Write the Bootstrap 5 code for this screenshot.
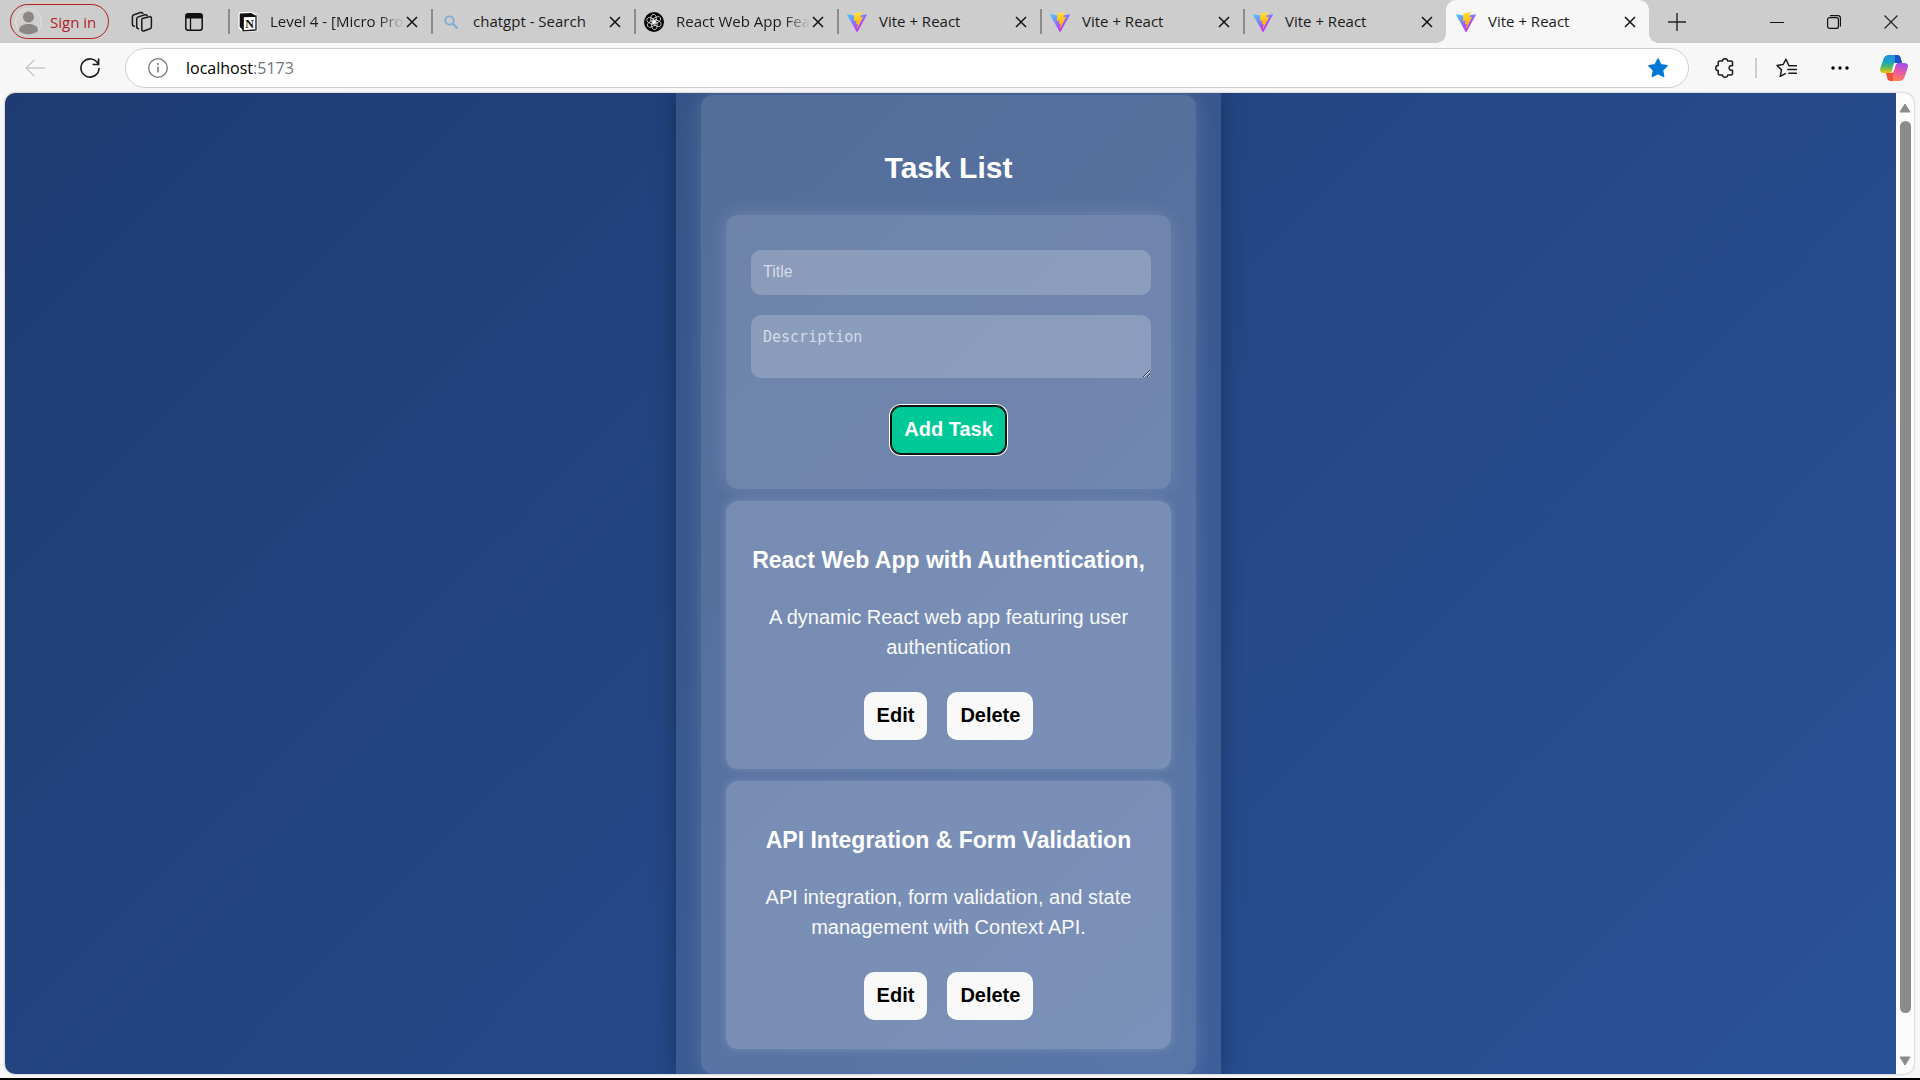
<!DOCTYPE html>
<html lang="en">
<head>
<meta charset="utf-8">
<meta name="viewport" content="width=device-width, initial-scale=1">
<title>Vite + React</title>
<link href="https://cdn.jsdelivr.net/npm/bootstrap@5.3.0/dist/css/bootstrap.min.css" rel="stylesheet">
<style>
  body { font-family: "Open Sans", "Noto Sans", sans-serif; background: #f7f7f7; color: #1b1b1b; }
  button { color: inherit; }
  svg { display: block; flex: none; }
  .ic { fill: none; stroke: #1b1b1b; stroke-width: 1.5; stroke-linecap: round; stroke-linejoin: round; }

  /* Tab strip */
  .tabstrip { height: 43px; background: #cdcdcd; font-size: 15px; line-height: 20px; }
  .signin { height: 35px; width: 99px; margin-left: 10px; padding: 0 4px; gap: 8px; border: 1px solid #b01e1e; color: #b01e1e; background: none; }
  .tool-first { margin-left: 22px; }
  .tool-second { margin-left: 32px; margin-right: 25px; }
  .plain { border: 0; background: none; padding: 0; display: flex; align-items: center; justify-content: center; }
  .browser-tab { width: 203px; height: 43px; padding-left: 7px; }
  .browser-tab::before { content: ""; width: 2px; height: 25px; background: #8b8b8b; flex: none; margin-left: -7px; margin-right: 8px; }
  .browser-tab a { gap: 12px; color: #1b1b1b; width: 164px; white-space: nowrap; }
  .browser-tab a span { padding-bottom: 2px; }
  .fading span { -webkit-mask-image: linear-gradient(90deg, #000 108px, transparent 134px); mask-image: linear-gradient(90deg, #000 108px, transparent 134px); }
  .browser-tab .plain { width: 20px; }
  .active-tab { background: #f7f7f7; border-radius: 10px 10px 0 0; position: relative; }
  .active-tab::before { background: none; }
  .active-tab::after { content: ""; position: absolute; bottom: 0; left: -10px; right: -10px; height: 10px; z-index: 0;
    background: radial-gradient(circle at 0 0, transparent 10px, #f7f7f7 10px) left / 10px 10px no-repeat,
                radial-gradient(circle at 100% 0, transparent 10px, #f7f7f7 10px) right / 10px 10px no-repeat; }
  .new-tab { width: 20px; margin-left: 18px; }
  .window-keys { gap: 37px; padding-right: 19px; }
  .window-keys .plain { width: 20px; height: 43px; }

  /* Address bar */
  .toolbar { height: 50px; padding: 0 8px 0 17px; }
  .slot { width: 36px; height: 36px; }
  .reload { margin-left: 19px; }
  .address { height: 40px; margin-left: 17px; padding: 0 20px 0 22px; border: 1px solid #cfcfcf; background: #fff; gap: 18px; font-size: 16px; }
  .address .host { color: #000; }
  .gap-before { margin-left: 18px; }
  .divider { width: 2px; height: 20px; background: #cfcfcf; margin: 0 11px 0 12px; }

  /* Page frame */
  .frame { margin: 0 6px 4px 5px; border-radius: 10px; box-shadow: 0 0 2px #9a9a9a; background: #fcfcfc; min-height: 0; }
  .stage { background: linear-gradient(135deg, #1e3c72, #2a5298); padding-right: 4px; font-family: "Liberation Sans", Arial, sans-serif; font-size: 20px; line-height: 30px; color: #fff; }
  .scroller { width: 18px; padding: 10px 0 8px; gap: 8px; }
  .thumb { width: 11px; margin-bottom: 35px; border-radius: 6px; background: #8b8b8b; }
  .taskbar-edge { height: 2px; background: #000; }

  /* Task app */
  .shell { width: 545px; padding: 2px 25px; background: rgba(255,255,255,.1); box-shadow: 0 0 20px rgba(0,0,0,.3); }
  .board { padding: 50px 25px 25px; border-radius: 12px; background: rgba(255,255,255,.15); box-shadow: 0 0 20px rgba(255,255,255,.15); }
  .board h1 { font-size: 30px; line-height: 45px; font-weight: 700; margin: 0 0 25px; }
  .tile { border-radius: 12px; margin-bottom: 12px; background: rgba(255,255,255,.2); box-shadow: 0 0 10px rgba(255,255,255,.2); padding: 42px 20px 29px; }
  .tile:last-child { margin-bottom: 0; }
  .tile h2 { font-size: 23px; line-height: 35px; font-weight: 700; margin: 0 0 24px; }
  .tile p { margin: 0 0 30px; color: #f9f9f9; }
  .tile-form { background: rgba(255,255,255,.15); box-shadow: 0 0 20px rgba(255,255,255,.15); padding: 35px 20px; }
  .fields { padding-left: 5px; }
  .field, .field:focus { border: 0; border-radius: 10px; background: rgba(255,255,255,.2); color: #fff; padding: 12px; font-size: 16px; line-height: 20px; box-shadow: none; }
  .field::placeholder { color: #d5dbe8; opacity: 1; }
  input.field { height: 45px; padding-bottom: 14px; margin-bottom: 20px; }
  textarea.field { height: 63px; min-height: 0; margin-bottom: 28px; font-family: "DejaVu Sans Mono", monospace; font-size: 15px; }
  .key, .key:hover { height: 48px; padding: 0 13px 2px; border: 0; border-radius: 10px; background: #f9f9f9; color: #000; font-size: 20px; line-height: 24px; font-weight: 700; }
  .key-add, .key-add:hover { background: #00c998; color: #fff; box-shadow: inset 0 0 0 1px #101010, 0 0 0 1px #101010, 0 0 0 2px #fff; }
  .key-row { gap: 20px; }
</style>
<script src="https://cdn.jsdelivr.net/npm/bootstrap@5.3.0/dist/js/bootstrap.bundle.min.js"></script>
</head>
<body class="vh-100 d-flex flex-column overflow-hidden">

<svg width="0" height="0" class="position-absolute" aria-hidden="true">
  <defs>
    <linearGradient id="vA" x1="0" y1="0" x2=".6" y2=".8"><stop offset="0" stop-color="#41d1ff"/><stop offset="1" stop-color="#bd34fe"/></linearGradient>
    <linearGradient id="vB" x1=".4" y1="0" x2=".5" y2=".9"><stop offset="0" stop-color="#ffea83"/><stop offset=".1" stop-color="#ffdd35"/><stop offset="1" stop-color="#ffa800"/></linearGradient>
    <linearGradient id="cA" x1="0" y1="0" x2="0" y2="1"><stop offset="0" stop-color="#1f8fe8"/><stop offset=".4" stop-color="#1ca5c0"/><stop offset=".65" stop-color="#4fb865"/><stop offset="1" stop-color="#f5c400"/></linearGradient>
    <linearGradient id="cB" x1=".7" y1="0" x2=".3" y2="1"><stop offset="0" stop-color="#a04df0"/><stop offset=".5" stop-color="#ee5a9c"/><stop offset="1" stop-color="#ff8a4c"/></linearGradient>
    <symbol id="vite" viewBox="0 0 256 257">
      <path fill="url(#vA)" d="M255.153 37.938L134.897 252.976c-2.483 4.44-8.862 4.466-11.382.048L.875 37.958c-2.746-4.814 1.371-10.646 6.827-9.67l120.385 21.517a6.537 6.537 0 0 0 2.322-.004l117.867-21.483c5.438-.991 9.574 4.796 6.877 9.62Z"/>
      <path fill="url(#vB)" d="M185.432.063L96.44 17.501a3.268 3.268 0 0 0-2.634 3.014l-5.474 92.456a3.268 3.268 0 0 0 3.997 3.378l24.777-5.718c2.318-.535 4.413 1.507 3.936 3.838l-7.361 36.047c-.495 2.426 1.782 4.5 4.151 3.78l15.304-4.649c2.372-.72 4.652 1.36 4.15 3.788l-11.698 56.621c-.732 3.542 3.979 5.473 5.943 2.437l1.313-2.028l72.516-144.72c1.215-2.423-.88-5.186-3.54-4.672l-25.505 4.922c-2.396.462-4.435-1.77-3.759-4.114l16.646-57.705c.677-2.35-1.37-4.583-3.769-4.113Z"/>
    </symbol>
    <symbol id="cross" viewBox="0 0 12 12"><path d="M1 1l10 10M11 1L1 11" stroke="#111" stroke-width="1.5" fill="none"/></symbol>
    <path id="petal" d="M-2.6-1.500L2.900 1.600 5.400.2C7.800-1.200 8.800-3.200 8-5C7-7 4.600-7.200 3-6.200L-1.400-3.700V.8" fill="none" stroke="#fff" stroke-width=".9"/>
  </defs>
</svg>

<header class="tabstrip d-flex align-items-center flex-shrink-0">
  <button type="button" class="signin rounded-pill d-flex align-items-center flex-shrink-0">
    <svg width="27" height="27" viewBox="0 0 27 27"><circle cx="13.500" cy="13.500" r="13" fill="#d0cfcd" stroke="#e3e1de"/><circle cx="13.500" cy="9" r="5.500" fill="#8b8784"/><path d="M4 23c0-5 4-7 9.500-7s9.500 2 9.500 7c-5 4.600-14 4.600-19 0z" fill="#8b8784"/></svg>
    <span class="text-nowrap">Sign in</span>
  </button>
  <button type="button" class="plain tool-first" aria-label="Workspaces">
    <svg class="ic" width="22" height="22" viewBox="0 0 22 22"><path d="M11.200 7.600l7.200-1.900a1.500 1.500 0 0 1 2 1.500v8.600a2 2 0 0 1-1.400 1.900l-6.200 2.300a1.500 1.500 0 0 1-2-1.400V9.400a2 2 0 0 1 .4-1.800z"/><path d="M7.400 17.800a2 2 0 0 1-1.700-1.900V7.800a2 2 0 0 1 1.500-1.900l6.800-2.100a2 2 0 0 1 2.200.8"/><path d="M3.400 15.200a2 2 0 0 1-2-1.900V5.800a2 2 0 0 1 1.500-2l6.800-2.300a2 2 0 0 1 2.200.8"/></svg>
  </button>
  <button type="button" class="plain tool-second" aria-label="Tab actions">
    <svg width="18" height="18" viewBox="0 0 18 18"><rect x=".8" y=".8" width="16.400" height="16.400" rx="2.500" fill="none" stroke="#111" stroke-width="1.500"/><path d="M.5 5.500V3A2.500 2.500 0 0 1 3 .5h12A2.500 2.500 0 0 1 17.500 3v2.500z" fill="#111"/><path d="M5.500 5v12" stroke="#111" stroke-width="1.300"/></svg>
  </button>

  <nav class="d-flex" aria-label="Tabs">
    <div class="browser-tab fading d-flex align-items-center">
      <a href="#" class="d-flex align-items-center text-decoration-none">
        <svg width="20" height="20" viewBox="0 0 20 20"><path d="M2 .8L13.500.2 18.600 3.500V18.500L5.500 19.600 1.200 15.500V2z" fill="#fff" stroke="#fff" stroke-width="1.600"/><path d="M2.200 1.600L13.400.9 17.800 4 5.200 4.800V18.500L1.700 14.800V2.200z" fill="#111"/><path d="M5.200 4.600L18 4V18L5.200 18.900z" fill="#fff" stroke="#111" stroke-width="1.300"/><text x="11.700" y="16" text-anchor="middle" font-family="Liberation Serif, serif" font-weight="700" font-size="12" fill="#111">N</text></svg>
        <span>Level 4 - [Micro Pro</span></a>
      <button type="button" class="plain" aria-label="Close tab"><svg width="12" height="12"><use href="#cross"/></svg></button>
    </div>
    <div class="browser-tab d-flex align-items-center">
      <a href="#" class="d-flex align-items-center text-decoration-none">
        <svg width="20" height="20" viewBox="0 0 20 20"><circle cx="8.500" cy="8.500" r="4.200" fill="none" stroke="#7fabd8" stroke-width="1.800"/><path d="M11.500 11.500l5 5" stroke="#7fabd8" stroke-width="2.200"/></svg>
        <span>chatgpt - Search</span></a>
      <button type="button" class="plain" aria-label="Close tab"><svg width="12" height="12"><use href="#cross"/></svg></button>
    </div>
    <div class="browser-tab fading d-flex align-items-center">
      <a href="#" class="d-flex align-items-center text-decoration-none">
        <svg width="20" height="20" viewBox="0 0 20 20"><circle cx="10" cy="10" r="10" fill="#000"/><g transform="translate(10 10) scale(.8)"><use href="#petal"/><use href="#petal" transform="rotate(60)"/><use href="#petal" transform="rotate(120)"/><use href="#petal" transform="rotate(180)"/><use href="#petal" transform="rotate(240)"/><use href="#petal" transform="rotate(300)"/></g></svg>
        <span>React Web App Fea</span></a>
      <button type="button" class="plain" aria-label="Close tab"><svg width="12" height="12"><use href="#cross"/></svg></button>
    </div>
    <div class="browser-tab d-flex align-items-center">
      <a href="#" class="d-flex align-items-center text-decoration-none"><svg width="20" height="20"><use href="#vite"/></svg><span>Vite + React</span></a>
      <button type="button" class="plain" aria-label="Close tab"><svg width="12" height="12"><use href="#cross"/></svg></button>
    </div>
    <div class="browser-tab d-flex align-items-center">
      <a href="#" class="d-flex align-items-center text-decoration-none"><svg width="20" height="20"><use href="#vite"/></svg><span>Vite + React</span></a>
      <button type="button" class="plain" aria-label="Close tab"><svg width="12" height="12"><use href="#cross"/></svg></button>
    </div>
    <div class="browser-tab d-flex align-items-center">
      <a href="#" class="d-flex align-items-center text-decoration-none"><svg width="20" height="20"><use href="#vite"/></svg><span>Vite + React</span></a>
      <button type="button" class="plain" aria-label="Close tab"><svg width="12" height="12"><use href="#cross"/></svg></button>
    </div>
    <div class="browser-tab active-tab d-flex align-items-center">
      <a href="#" class="d-flex align-items-center text-decoration-none" aria-current="page"><svg width="20" height="20"><use href="#vite"/></svg><span>Vite + React</span></a>
      <button type="button" class="plain" aria-label="Close tab"><svg width="12" height="12"><use href="#cross"/></svg></button>
    </div>
  </nav>
  <button type="button" class="plain new-tab" aria-label="New tab"><svg width="18" height="18" viewBox="0 0 18 18"><path d="M9 0v18M0 9h18" stroke="#222" stroke-width="1.400"/></svg></button>
  <div class="window-keys d-flex ms-auto">
    <button type="button" class="plain" aria-label="Minimise"><svg width="14" height="14" viewBox="0 0 14 14"><path d="M0 7.500h14" stroke="#111"/></svg></button>
    <button type="button" class="plain" aria-label="Restore"><svg width="14" height="14" viewBox="0 0 14 14" fill="none" stroke="#111" stroke-width="1.200"><rect x=".6" y="2.600" width="10.800" height="10.800" rx="2"/><path d="M3 .6h8a2.400 2.400 0 0 1 2.400 2.400v8.500"/></svg></button>
    <button type="button" class="plain" aria-label="Close window"><svg width="14" height="14" viewBox="0 0 14 14"><path d="M.5.5l13 13M13.500.5l-13 13" stroke="#222" stroke-width="1.200"/></svg></button>
  </div>
</header>

<div class="toolbar d-flex align-items-center flex-shrink-0">
  <button type="button" class="plain slot" aria-label="Back"><svg width="20" height="18" viewBox="0 0 20 18"><path d="M9.500.7L1 9l8.500 8.300M1 9h19" fill="none" stroke="#c9c9c9" stroke-width="1.400"/></svg></button>
  <button type="button" class="plain slot reload" aria-label="Refresh"><svg width="20" height="20" viewBox="0 0 20 20"><path d="M18.200 6A9.100 9.100 0 1 0 19.100 10M18.600.5v6h-6" fill="none" stroke="#1b1b1b" stroke-width="1.600"/></svg></button>
  <div class="address rounded-pill d-flex align-items-center flex-fill">
    <svg width="20" height="20" viewBox="0 0 20 20"><circle cx="10" cy="10" r="9.300" fill="none" stroke="#777" stroke-width="1.300"/><path d="M10 8.500v6" stroke="#777" stroke-width="1.500"/><circle cx="10" cy="6" r="1" fill="#777"/></svg>
    <div class="flex-fill host" role="textbox" aria-label="Address" contenteditable="true" spellcheck="false">localhost<span class="text-secondary">:5173</span></div>
    <svg width="20" height="20" viewBox="0 0 20 20"><path d="M10 1l2.800 5.800 6.300.9-4.600 4.400 1.100 6.300L10 15.500l-5.600 2.900 1.100-6.300L.9 7.700l6.300-.9z" fill="#0078d7" stroke="#0078d7" stroke-width="1.500" stroke-linejoin="round"/></svg>
  </div>
  <button type="button" class="plain slot gap-before" aria-label="Extensions"><svg class="ic" width="20" height="20" viewBox="0 0 20 20"><path d="M4.700 3H7.500a2.600 2.300 0 0 1 5.200 0H16a1.500 1.500 0 0 1 1.500 1.500v3.300h-1.200a2.200 2.200 0 0 0 0 4.400h1.200V15.500A1.500 1.500 0 0 1 16 17h-3.300a2.600 2.300 0 0 1-5.200 0H4.700a1.500 1.500 0 0 1-1.500-1.500v-2.900a2.400 2.600 0 0 1 0-5.200V4.500A1.500 1.500 0 0 1 4.700 3z"/></svg></button>
  <div class="divider"></div>
  <button type="button" class="plain slot" aria-label="Favorites"><svg class="ic" width="21" height="20" viewBox="0 0 21 20"><path d="M12.700 7.200L10 1.200 7.200 6.500 1 7.400l4.500 4.300-1.200 6.600 5-2.600M13 7.700h7.500M12 11.500h8.500M13 15.300h7.500"/></svg></button>
  <button type="button" class="plain slot gap-before" aria-label="More"><svg width="18" height="4" viewBox="0 0 18 4"><circle cx="2" cy="2" r="1.700"/><circle cx="9" cy="2" r="1.700"/><circle cx="16" cy="2" r="1.700"/></svg></button>
  <button type="button" class="plain slot gap-before" aria-label="Copilot"><svg width="28" height="26" viewBox="0 0 28 26">
    <path d="M9 0h8c2 0 3 1 3.600 2.800L22 8h-4c-2 0-3 1-3.600 2.800L12 18H4c-3.500 0-4.500-2-3.600-5L3.500 4C4.300 1.500 6 0 9 0z" fill="url(#cA)"/>
    <path d="M15 0h2c2 0 3 1 3.600 2.800L22 8h-4c-1.500 0-2.600.6-3.200 2z" fill="#1c4fc4"/>
    <path d="M19 26h-8c-2 0-3-1-3.600-2.800L6 18h4c2 0 3-1 3.600-2.800L16 8h8c3.500 0 4.500 2 3.600 5l-3.100 9c-.8 2.500-2.500 4-5.500 4z" fill="url(#cB)"/>
    <path d="M13 26h-2c-2 0-3-1-3.600-2.800L6 18h4c1.500 0 2.600-.6 3.200-2z" fill="#f4503c"/>
    <path d="M14.800 8H18c-1 0-2 1-2.600 2.800L14 15.500c-.6 1.800-1.500 2.500-3 2.500H9.500c1.500 0 2-1 2.500-2.500l1.300-5C13.700 9 14 8 14.800 8z" fill="#fff"/></svg></button>
</div>

<div class="frame d-flex flex-fill overflow-hidden">
  <main class="stage d-flex justify-content-center flex-fill overflow-hidden">
    <div class="shell">
      <div class="board text-center">
        <h1>Task List</h1>
        <form class="tile tile-form" onsubmit="return false">
          <div class="fields">
            <label class="visually-hidden" for="task-title">Title</label>
            <input id="task-title" type="text" class="form-control field" placeholder="Title">
            <label class="visually-hidden" for="task-text">Description</label>
            <textarea id="task-text" class="form-control field" placeholder="Description"></textarea>
          </div>
          <button type="submit" class="btn key key-add">Add Task</button>
        </form>
        <article class="tile">
          <h2>React Web App with Authentication,</h2>
          <p>A dynamic React web app featuring user authentication</p>
          <div class="key-row d-flex justify-content-center">
            <button type="button" class="btn key">Edit</button>
            <button type="button" class="btn key">Delete</button>
          </div>
        </article>
        <article class="tile">
          <h2>API Integration &amp; Form Validation</h2>
          <p>API integration, form validation, and state management with Context API.</p>
          <div class="key-row d-flex justify-content-center">
            <button type="button" class="btn key">Edit</button>
            <button type="button" class="btn key">Delete</button>
          </div>
        </article>
      </div>
    </div>
  </main>
  <div class="scroller d-flex flex-column align-items-center" aria-hidden="true">
    <svg width="12" height="10" viewBox="0 0 12 10"><path d="M6 1l5 8H1z" fill="#8b8b8b" stroke="#8b8b8b" stroke-linejoin="round"/></svg>
    <div class="thumb flex-fill"></div>
    <svg width="12" height="10" viewBox="0 0 12 10"><path d="M6 9l5-8H1z" fill="#8b8b8b" stroke="#8b8b8b" stroke-linejoin="round"/></svg>
  </div>
</div>
<div class="taskbar-edge flex-shrink-0"></div>
</body>
</html>
